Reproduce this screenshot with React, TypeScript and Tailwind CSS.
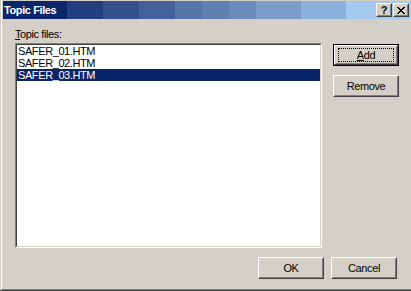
import React from 'react'

const font = "font-['Liberation_Sans',Arial,sans-serif]"

// classic raised 3D edge: white / #404040 outside, #d4d0c8 / #808080 inside
function Raised({ className, children }: { className?: string; children?: React.ReactNode }) {
  return (
    <div className={`border border-t-white border-l-white border-r-[#404040] border-b-[#404040] bg-[#d4d0c8] ${className ?? ''}`}>
      <div className="flex h-full w-full items-center justify-center border border-t-[#d4d0c8] border-l-[#d4d0c8] border-r-[#808080] border-b-[#808080]">
        {children}
      </div>
    </div>
  )
}

function PushButton({ label, under, isDefault }: { label: string; under?: boolean; isDefault?: boolean }) {
  const text = under ? (
    <span>
      <span className="underline underline-offset-1">{label[0]}</span>
      {label.slice(1)}
    </span>
  ) : (
    label
  )
  if (isDefault) {
    return (
      <div className="h-[22px] w-[66px] border border-black">
        <Raised className="h-full w-full">
          <div className="flex h-[14px] w-[56px] items-center justify-center border border-dotted border-black text-[11px] text-black">
            {text}
          </div>
        </Raised>
      </div>
    )
  }
  return (
    <Raised className="h-[22px] w-[66px]">
      <span className="text-[11px] text-black">{text}</span>
    </Raised>
  )
}

const files = ['SAFER_01.HTM', 'SAFER_02.HTM', 'SAFER_03.HTM']

export default function App() {
  return (
    <div className={`${font} h-[291px] w-[411px] overflow-hidden border-b border-b-[#404040] bg-[#d4d0c8] pl-[1px] tracking-[-0.4px]`}>
      <div className="flex h-full flex-col border-b border-l border-b-[#808080] border-l-white">
        {/* title bar */}
        <div className="ml-[1px] mt-[1px] flex h-[18px] items-center bg-[linear-gradient(90deg,#0c266c_0px,#0c266c_64px,#233f7f_64px,#233f7f_100px,#33508c_100px,#33508c_136px,#43609a_136px,#43609a_172px,#5574a8_172px,#5574a8_199px,#6180b2_199px,#6180b2_226px,#6c8cbe_226px,#6c8cbe_253px,#7c9cca_253px,#7c9cca_298px,#8eb0dc_298px,#8eb0dc_343px,#a4c8ee_343px)] pl-[1px] pr-[2px]">
          <span className="text-[11px] font-bold text-white">Topic Files</span>
          <div className="ml-auto flex gap-[1px]">
            <Raised className="h-[14px] w-[16px]">
              <span className="text-[11px] font-bold leading-none text-black">?</span>
            </Raised>
            <Raised className="h-[14px] w-[16px]">
              <svg width="8" height="7" viewBox="0 0 8 7" shapeRendering="crispEdges">
                <path d="M0 0h2v1H0zM6 0h2v1H6zM1 1h2v1H1zM5 1h2v1H5zM2 2h4v1H2zM3 3h2v1H3zM2 4h4v1H2zM1 5h2v1H1zM5 5h2v1H5zM0 6h2v1H0zM6 6h2v1H6z" fill="black" />
              </svg>
            </Raised>
          </div>
        </div>

        {/* body */}
        <div className="flex pl-[13px]">
          <div className="flex flex-col">
            <div className="mt-[8px] h-[14px] text-[11px] leading-[14px] text-black">
              <span className="underline underline-offset-1">T</span>opic files:
            </div>
            <div className="mt-[2px] h-[205px] w-[307px] border border-t-[#808080] border-l-[#808080] border-r-white border-b-white">
              <div className="h-full w-full border border-t-[#404040] border-l-[#404040] border-r-[#d4d0c8] border-b-[#d4d0c8] bg-white">
                {files.map((f, i) => (
                  <div
                    key={f}
                    className={`h-[12px] pl-[1px] text-[11px] leading-[12px] ${i === 2 ? 'bg-[#0a246a] text-white' : 'text-black'}`}
                  >
                    {f}
                  </div>
                ))}
              </div>
            </div>
          </div>
          <div className="ml-[11px] mt-[25px] flex flex-col gap-[9px]">
            <PushButton label="Add" under isDefault />
            <PushButton label="Remove" />
          </div>
        </div>

        <div className="mt-[9px] flex justify-end gap-[7px] pr-[14px]">
          <PushButton label="OK" />
          <PushButton label="Cancel" />
        </div>
      </div>
    </div>
  )
}
